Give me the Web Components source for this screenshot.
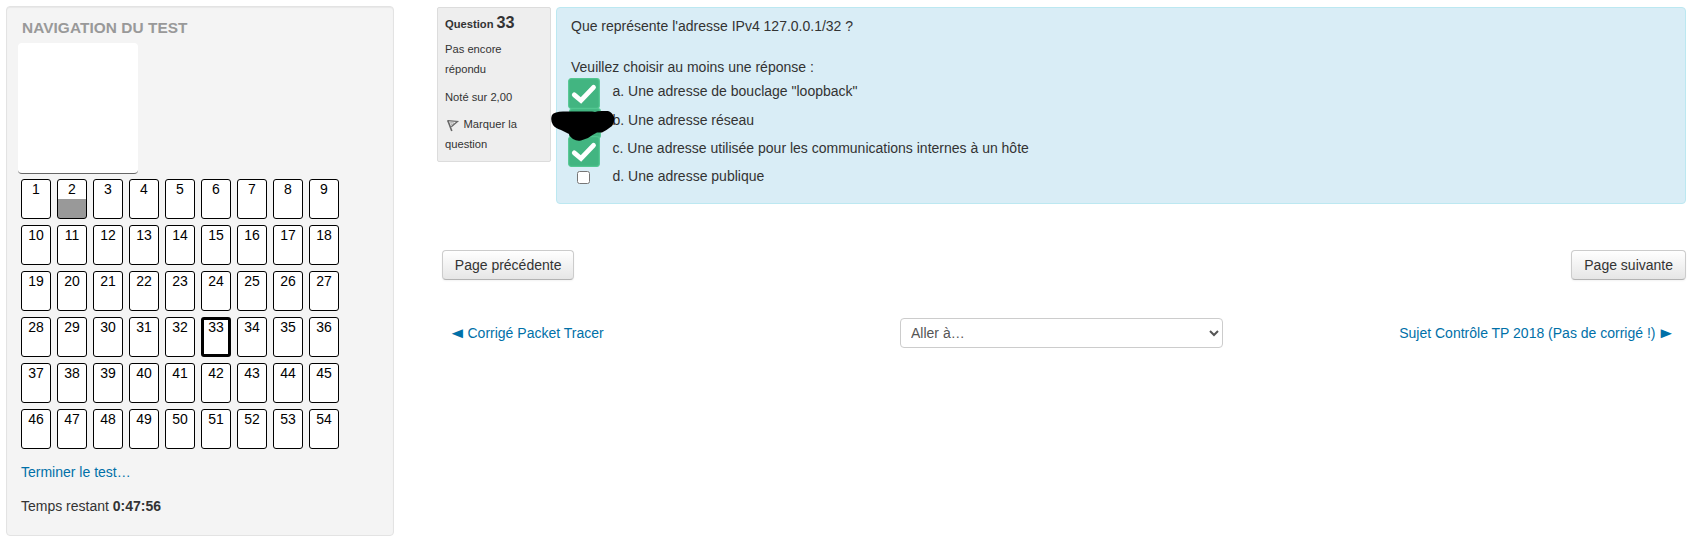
<!DOCTYPE html>
<html lang="fr">
<head>
<meta charset="utf-8">
<title>Test</title>
<style>
html,body{margin:0;background:#fff}
body{font:14px/20px "Liberation Sans",Arial,sans-serif;color:#333;overflow:hidden}
</style>
</head>
<body>
<quiz-page></quiz-page>
<script>
function define(name, html, setup) {
  customElements.define(name, class extends HTMLElement {
    connectedCallback() {
      if (this.shadowRoot) return;
      const t = document.createElement('template');
      t.innerHTML = html;
      this.attachShadow({mode: 'open'}).append(t.content.cloneNode(true));
      if (setup) setup.call(this, this.shadowRoot);
    }
  });
}

define('nav-cell', `
<style>
:host{display:block;box-sizing:border-box;width:30px;height:40px;border:1px solid #000;border-radius:3px;background:#fff;color:#000;text-align:center;font-size:14px;line-height:18px;overflow:hidden}
:host([current]){border-width:3px;line-height:14px}
:host([answered]){background:linear-gradient(#fff 19px,#999 19px)}
</style><slot></slot>`);

define('quiz-nav', `
<style>
:host{display:block;box-sizing:border-box;width:388px;height:530px;border:1px solid #e3e3e3;border-radius:4px;background:#f4f4f4;box-shadow:inset 0 1px 1px rgba(0,0,0,.05);padding:11px 11px 0}
h2{margin:0 0 5px 4px;font-size:15.4px;line-height:20px;color:#999;text-transform:uppercase;letter-spacing:.06px}
.photo{box-sizing:border-box;width:120px;height:131px;background:#fff;border-bottom:1px solid #666;border-radius:4px}
.grid{display:grid;grid-template-columns:repeat(9,30px);gap:6px;margin:5px 0 0 3px}
a{display:block;margin:13px 0 0 3px;color:#0070a8}
p{margin:14px 0 0 3px}
</style>
<h2>Navigation du test</h2>
<div class="photo"></div>
<div class="grid"></div>
<a>Terminer le test…</a>
<p>Temps restant <b>0:47:56</b></p>`, function (root) {
  const grid = root.querySelector('.grid');
  for (let i = 1; i <= 54; i++) {
    const c = document.createElement('nav-cell');
    c.textContent = i;
    if (i === 2) c.setAttribute('answered', '');
    if (i === 33) c.setAttribute('current', '');
    grid.append(c);
  }
});

define('question-info', `
<style>
:host{display:block;box-sizing:border-box;width:114px;height:155px;border:1px solid #dcdcdc;border-radius:2px;background:#eee;padding:4px 7px 0;font-size:11.2px;line-height:20px}
h3{margin:0;font-size:11.2px;line-height:20px}
h3 span{font-size:16.2px}
div{margin:5px 0 0}
div+div{margin-top:8px}
div.flag{margin-top:7px}
svg{display:inline-block;width:16px;height:16px;vertical-align:-6px;margin-right:2.5px}
</style>
<h3>Question <span>33</span></h3>
<div>Pas encore répondu</div>
<div>Noté sur 2,00</div>
<div class="flag"><svg viewBox="0 0 16 16" fill="none"><path d="M2.800 2.500L6.800 13" stroke="#666" stroke-width="1.600"/><path d="M2.500 2.600L12.500 3.400L6.300 8.800" stroke="#666" stroke-width="1.300"/><path d="M5.500 4.500L9 5L6.800 7Z" stroke="#aaa" stroke-width=".9"/></svg>Marquer la question</div>`);

define('check-stamp', `
<style>:host{display:block;width:32px;height:31px}svg{display:block}</style>
<svg width="32" height="31" viewBox="0 0 32 31"><rect x=".7" y=".7" width="30.600" height="29.600" rx="2.500" fill="#42b581" stroke="#52c791" stroke-width="1.200"/><path d="M6.300 16.800L13 22.500L25.500 9.300" fill="none" stroke="#fff" stroke-width="4.800" stroke-linecap="round" stroke-linejoin="miter"/></svg>`);

define('answer-row', `
<style>
:host{display:flex;height:28px}
.box{width:13px;margin:5px 22.500px 0 6px}
input{display:block;width:13px;height:13px;margin:0}
</style>
<div class="box"><input type="checkbox"></div><span><slot></slot></span>`);

define('marked-scribble', `
<style>
:host{display:block;width:64px;height:93px}
check-stamp,svg{position:absolute}
.a{left:17px;top:0}.b{left:18px;top:30px}.c{left:17px;top:58px}
svg{left:-.5px;top:30px}
</style>
<check-stamp class="b"></check-stamp>
<check-stamp class="a"></check-stamp>
<check-stamp class="c"></check-stamp>
<svg width="64" height="36" viewBox="0 0 64 36"><path d="M5 4.500Q8 3.500 12 3.500H41Q43 3.500 44 4Q46 3 51 3H57Q61 4 63 9Q64 14 61 18Q56 22 51 24.500H46Q41 27 37 30L30 32.500Q26 33.500 22 31Q18 28 18 26Q14 24 10 22Q4 20 2 17Q-1 12 1 7Q2 5 5 4.500Z" fill="#000"/></svg>`);

define('question-body', `
<style>
:host{display:block;box-sizing:border-box;position:relative;flex:1;height:197px;border:1px solid #bce8f1;border-radius:4px;background:#d9edf6;padding:8px 14px 0}
p{margin:0 0 21px}
.prompt{margin:0}
.answers{margin-top:4px}
answer-row:nth-child(1){height:29px}
marked-scribble{position:absolute;left:-6px;top:70px}
</style>
<p>Que représente l'adresse IPv4 127.0.0.1/32 ?</p>
<p class="prompt">Veuillez choisir au moins une réponse :</p>
<div class="answers">
<answer-row>a. Une adresse de bouclage "loopback"</answer-row>
<answer-row>b. Une adresse réseau</answer-row>
<answer-row>c. Une adresse utilisée pour les communications internes à un hôte</answer-row>
<answer-row>d. Une adresse publique</answer-row>
</div>
<marked-scribble></marked-scribble>`);

define('page-button', `
<style>
:host{display:block}
button{display:block;box-sizing:border-box;height:30px;padding:4px 11.800px;border:1px solid #ccc;border-bottom-color:#b3b3b3;border-radius:4px;background:linear-gradient(#fff,#e6e6e6);box-shadow:inset 0 1px 0 rgba(255,255,255,.2),0 1px 2px rgba(0,0,0,.05);font:inherit;line-height:20px;color:#333;white-space:nowrap}
:host([wide]) button{padding:4px 12px}
</style><button><slot></slot></button>`);

define('jump-select', `
<style>
:host{display:block}
select{display:block;box-sizing:border-box;width:323px;height:30px;padding:4px 2px 4px 6px;border:1px solid #ccc;border-radius:4px;background:#fff;font:inherit;color:#555}
</style><select><option>Aller à…</option></select>`);

define('quiz-page', `
<style>
:host{display:flex;padding:6px 7px 0 6px;gap:43px;align-items:flex-start}
main{flex:1;min-width:0;padding-top:1px}
.question{display:flex;gap:5px;align-items:flex-start}
.buttons{display:flex;justify-content:space-between;margin:46px 0 0 5px}
.links{display:grid;grid-template-columns:1fr 323px 1fr;align-items:center;margin-top:38px;padding:0 14px}
.links a{color:#0070a8;display:flex;gap:4px}
.arrow{display:flex;justify-content:center;width:12.500px;font-size:15px;transform:scaleX(1.25)}
.links .next{justify-content:flex-end}
</style>
<quiz-nav></quiz-nav>
<main>
<div class="question"><question-info></question-info><question-body></question-body></div>
<div class="buttons"><page-button>Page précédente</page-button><page-button wide>Page suivante</page-button></div>
<div class="links"><a><span class="arrow">◄</span><span>Corrigé Packet Tracer</span></a><jump-select></jump-select><a class="next"><span>Sujet Contrôle TP 2018 (Pas de corrigé !)</span><span class="arrow">►</span></a></div>
</main>`);
</script>
</body>
</html>
